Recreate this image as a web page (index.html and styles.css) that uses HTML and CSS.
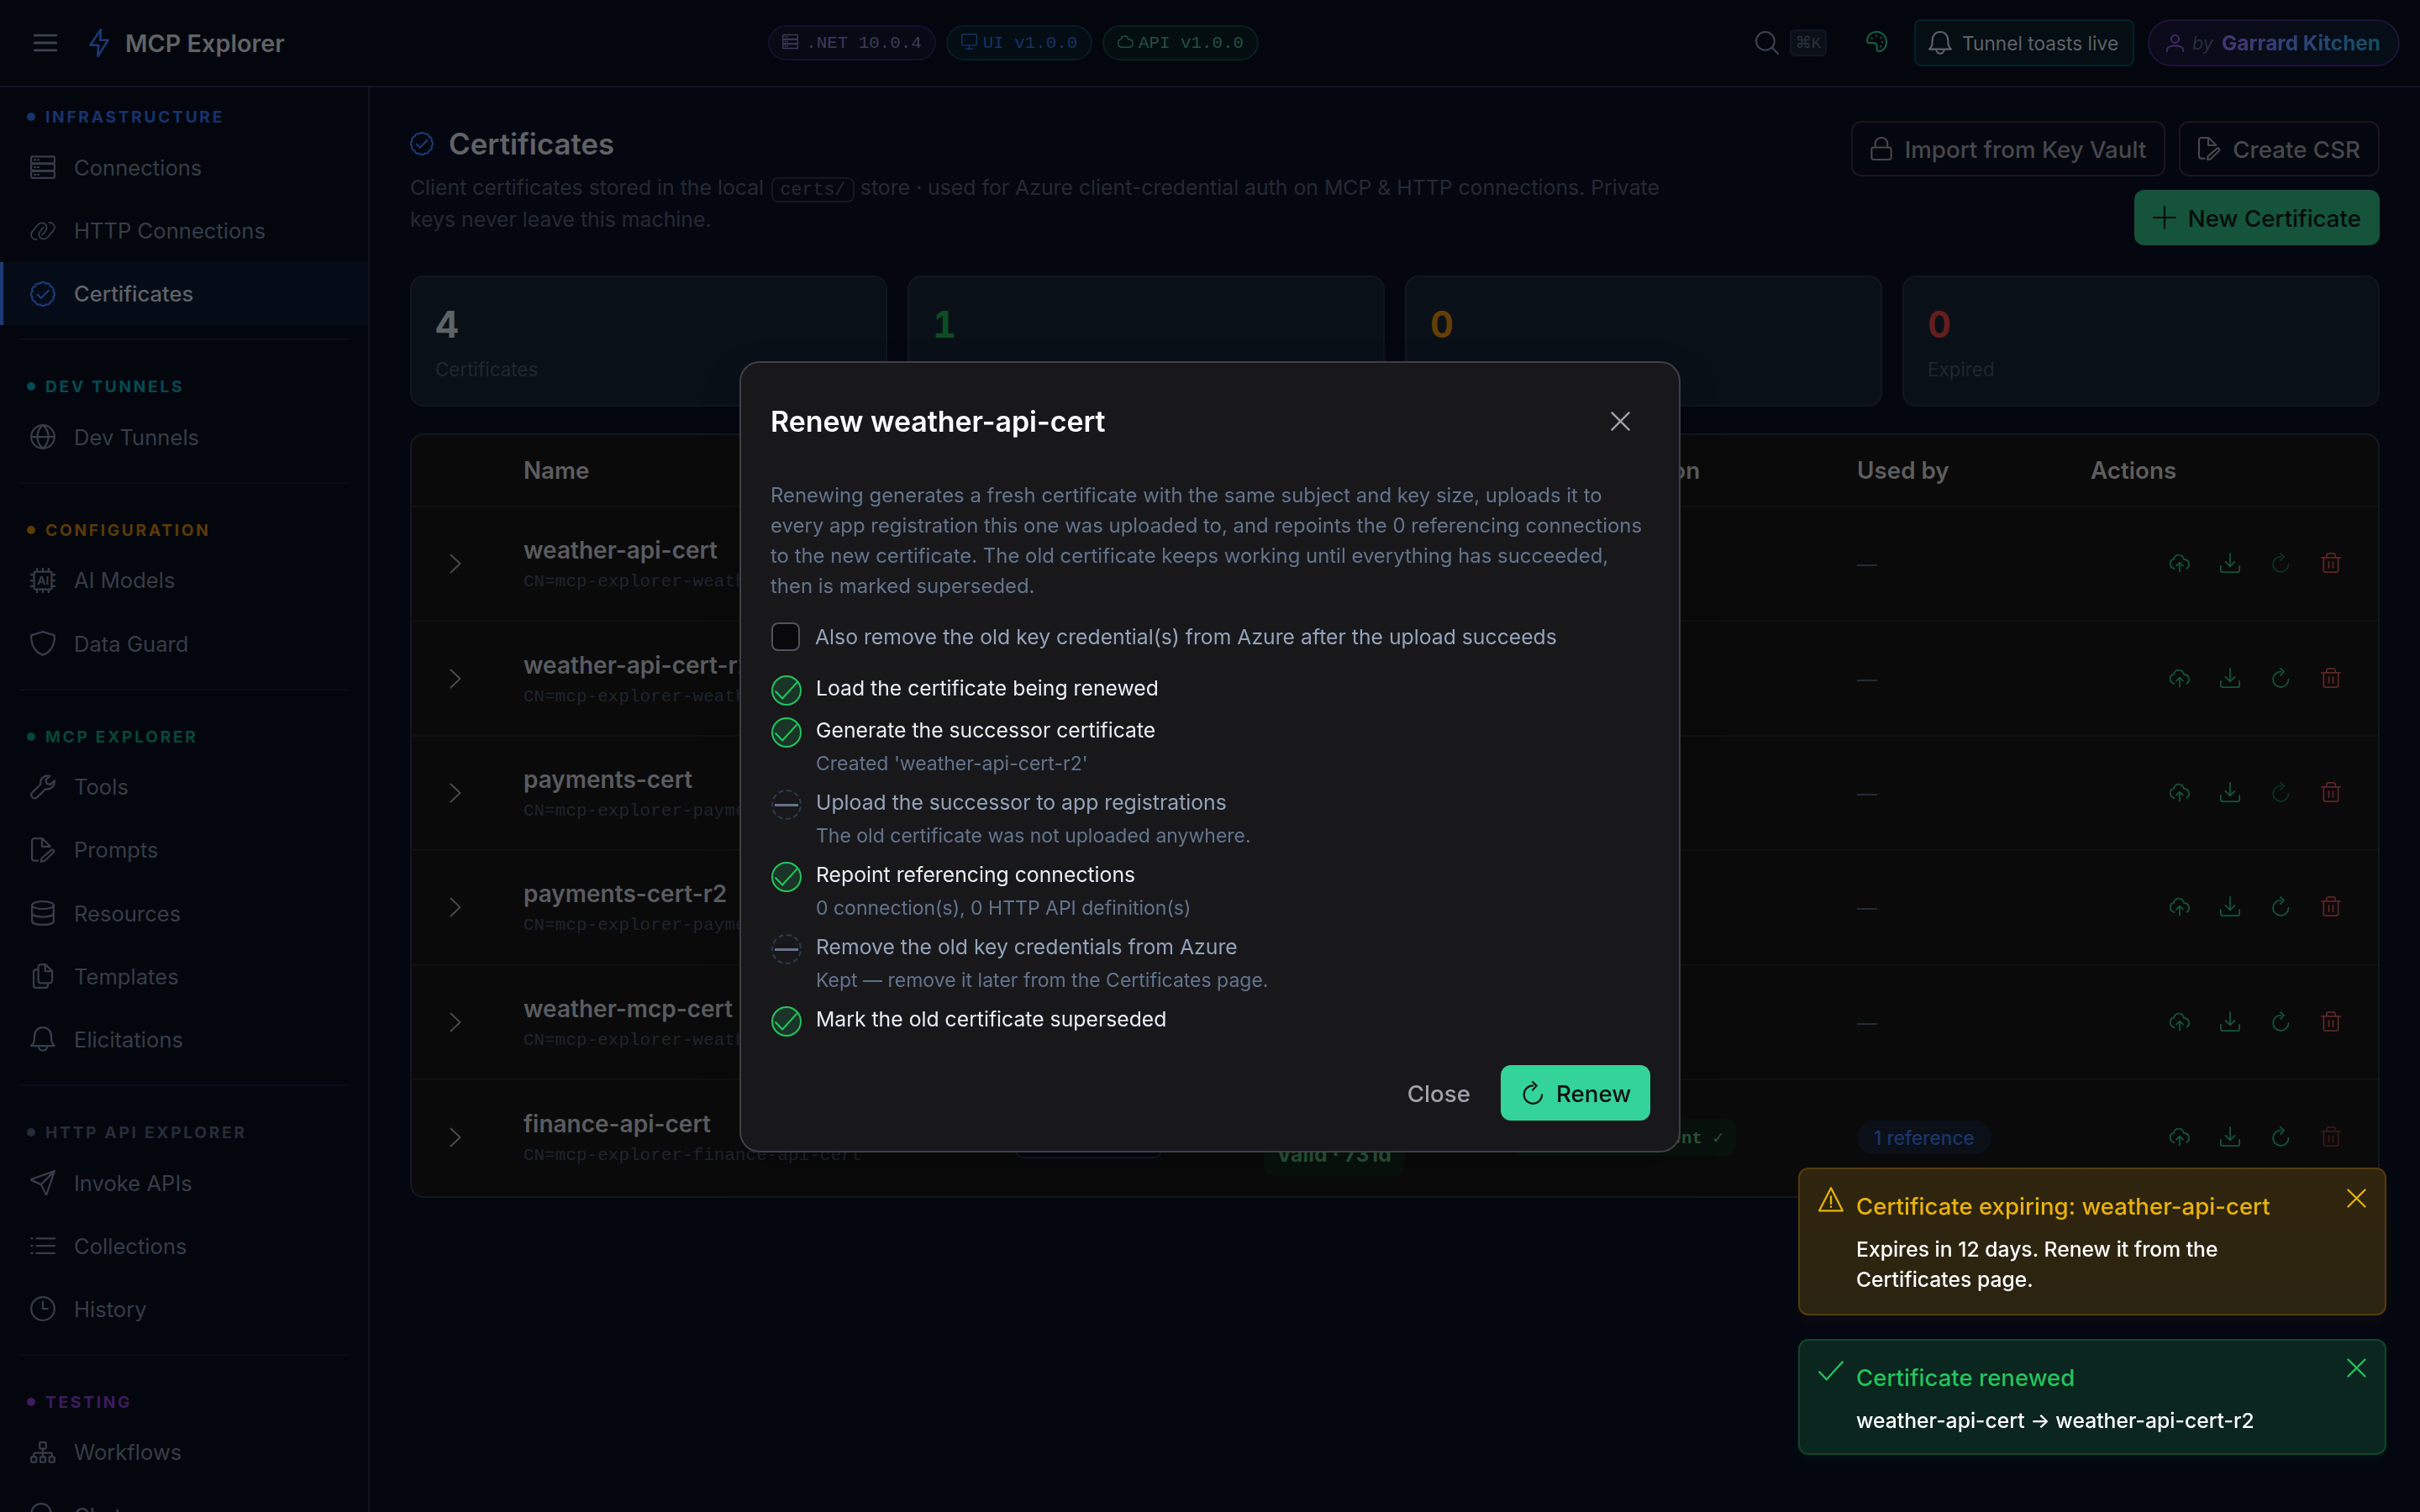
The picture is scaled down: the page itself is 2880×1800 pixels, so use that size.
FILE: index.html
```html
<!DOCTYPE html>
<html lang="en">
<head>
<meta charset="utf-8">
<title>MCP Explorer</title>
<link rel="stylesheet" href="styles.css">
</head>
<body>
<svg class="sprite" aria-hidden="true">
  <symbol id="menu" viewBox="0 0 24 24"><path d="M1 4.4h22M1 12h22M1 19.6h22"/></symbol>
  <symbol id="bolt" viewBox="0 0 24 36"><path d="M14 2 1.5 20.8h9.6L10.4 34 22.7 14.8h-9.4z"/></symbol>
  <symbol id="server" viewBox="0 0 24 24"><rect x=".9" y="1.9" width="22.2" height="6.3" rx="1"/><rect x=".9" y="8.9" width="22.2" height="6.3" rx="1"/><rect x=".9" y="15.9" width="22.2" height="6.3" rx="1"/><path d="M4 5h.8M7.2 5H8M4 12h.8M7.2 12H8M4 19h.8M7.2 19H8"/></symbol>
  <symbol id="link" viewBox="0 0 30 30"><path d="M7.5 25C4 25.2 1 23 1 19.5c0-2 .8-3.2 2.2-4.8l6-7.2C12.5 4 19.5 5 19.5 11c0 1.8-.6 3-1.8 4.5l-3.4 4"/><path transform="rotate(180 15 15)" d="M7.5 25C4 25.2 1 23 1 19.5c0-2 .8-3.2 2.2-4.8l6-7.2C12.5 4 19.5 5 19.5 11c0 1.8-.6 3-1.8 4.5l-3.4 4"/></symbol>
  <symbol id="verified" viewBox="0 0 24 24"><path d="M21.85 14.64A3.2 3.2 0 0 1 19.21 19.21A3.2 3.2 0 0 1 14.64 21.85A3.2 3.2 0 0 1 9.36 21.85A3.2 3.2 0 0 1 4.79 19.21A3.2 3.2 0 0 1 2.15 14.64A3.2 3.2 0 0 1 2.15 9.36A3.2 3.2 0 0 1 4.79 4.79A3.2 3.2 0 0 1 9.36 2.15A3.2 3.2 0 0 1 14.64 2.15A3.2 3.2 0 0 1 19.21 4.79A3.2 3.2 0 0 1 21.85 9.36A3.2 3.2 0 0 1 21.85 14.64z"/><path d="m7 12.6 3.3 3.4L17.5 8.6"/></symbol>
  <symbol id="globe" viewBox="0 0 24 24"><circle cx="12" cy="12" r="11.1"/><path d="M.9 12h22.2M12 .9c-7 6-7 16.200 0 22.200M12 .9c7 6 7 16.200 0 22.200"/></symbol>
  <symbol id="chip" viewBox="0 0 24 24"><rect x="3.6" y="3.6" width="16.8" height="16.8" rx="1.5"/><path d="M6.500 .5v3M12 .5v3M17.500 .5v3M6.500 20.500v3M12 20.500v3M17.500 20.500v3M.5 6.500h3M.5 12h3M.5 17.500h3M20.500 6.500h3M20.500 12h3M20.500 17.500h3"/><text class="chip-text" x="12.2" y="16">AI</text></symbol>
  <symbol id="shield" viewBox="0 0 24 24"><path d="M12 .9 23.100 4.300C23.400 13 20 20 12 23.100 4 20 .6 13 .9 4.300z"/></symbol>
  <symbol id="wrench" viewBox="0 0 24 24"><path d="M18.800 1.400C14 .2 9 3.500 9.800 9.400L1.800 17.300c-2.600 3 1.300 7 4.600 4.600l8.200-8c5 .8 9-3 8.400-8L19.300 9.500l-3.700-.8-.9-3.600z"/></symbol>
  <symbol id="fileedit" viewBox="0 0 24 24"><path d="M7.500 22H4a2.300 2.300 0 0 1-2.300-2.300V3.200A2.300 2.300 0 0 1 4 .9h7.500L19 8.400M11.200 1v7.600H19M20 11.900c1.500-1.200 3.400.7 2.200 2.200l-8.600 8.300-3.400.7.700-3.500z"/></symbol>
  <symbol id="database" viewBox="0 0 24 24"><ellipse cx="12" cy="4.5" rx="10.3" ry="3.6"/><path d="M1.700 4.500v15c0 4.800 20.600 4.800 20.600 0v-15M1.700 12c0 4.800 20.600 4.800 20.600 0"/></symbol>
  <symbol id="clone" viewBox="0 0 24 24"><path d="M7.600 5.800H5.500a2.300 2.300 0 0 0-2.300 2.300v12.700a2.300 2.300 0 0 0 2.300 2.300h9a2.300 2.300 0 0 0 2.300-2.300v-2.100M14.400.9H10a2.300 2.300 0 0 0-2.300 2.300v13.200A2.300 2.300 0 0 0 10 18.700h8.600a2.300 2.300 0 0 0 2.300-2.300V7.200zM14.200 1v6.300h6.500"/></symbol>
  <symbol id="bell" viewBox="0 0 24 24"><path d="M.9 18.500h22.200C20 15.500 20 13.500 20 9.500c0-5-3-8.600-8-8.600S4 4.500 4 9.500c0 4 0 6-3.100 9zM8 18.700c0 5.600 8 5.600 8 0"/></symbol>
  <symbol id="send" viewBox="0 0 24 24"><path d="M23.100.9 1 8.800c-.4.200-.4.500 0 .7l9.300 4.200 4.500 9.200c.2.400.6.400.8 0zM10.300 13.700 23.100.9"/></symbol>
  <symbol id="list" viewBox="0 0 24 24"><path d="M6 5h17.200M6 12h17.200M6 19h17.200M.9 5h1.200M.9 12h1.200M.9 19h1.200"/></symbol>
  <symbol id="clock" viewBox="0 0 24 24"><circle cx="12" cy="12" r="11.1"/><path d="M12 5.200V12h4.600"/></symbol>
  <symbol id="sitemap" viewBox="0 0 24 24"><rect x="9" y="2.5" width="6" height="6" rx="1"/><rect x=".9" y="16.3" width="5" height="5" rx="1"/><rect x="9.5" y="16.3" width="5" height="5" rx="1"/><rect x="18.1" y="16.3" width="5" height="5" rx="1"/><path d="M12 8.500v7.800M3.400 16V13.400q0-1 1-1h15.200q1 0 1 1V16"/></symbol>
  <symbol id="comments" viewBox="0 0 24 24"><path d="M2 14.500C-1 5 5.500.9 10.500.9c5 0 8.500 3.600 8.800 7.600M2 14.500 1.200 19l5-.8M19 8c6 4 4 9 2.700 10.500l.8 4-4.500-1c-5 2-9 0-11-3"/></symbol>
  <symbol id="desktop" viewBox="0 0 24 24"><rect x=".9" y="1" width="22.2" height="16.5" rx="1.5"/><path d="M12 17.500v5M7 23h10"/></symbol>
  <symbol id="cloud" viewBox="0 0 24 24"><path d="M6.800 20.500C-1 20.500-1 9.500 5.300 8.700 5.800 3 14.500 1.500 16 8.500c9 0 9 12 1 12z"/></symbol>
  <symbol id="search" viewBox="0 0 24 24"><circle cx="10.2" cy="10.2" r="9.3"/><path d="m17 17 6.200 6.200"/></symbol>
  <symbol id="palette" viewBox="0 0 24 24"><path d="M1 11C1.500 4 7 .9 12 .9c6 0 11.100 4.500 11.100 11.600 0 6-4 10.600-8.600 10.600-3.500 0-2-4-2.500-7C11.300 12 7 14 3 13.500 1.200 13 .9 12.500 1 11z"/><path d="M6.500 8.200v.1M11.500 5.500v.1M16.800 7.500v.1M18.500 12.500v.1M16.500 17.500v.1"/></symbol>
  <symbol id="user" viewBox="0 0 24 24"><circle cx="12" cy="6.2" r="5.2"/><path d="M.9 23.200V21c0-7.500 22.200-7.500 22.200 0v2.200"/></symbol>
  <symbol id="lock" viewBox="0 0 24 24"><rect x="2" y="10.7" width="20" height="12.4" rx="2.3"/><path d="M5.800 10.500V6.800c0-7.900 12.400-7.900 12.400 0v3.700"/></symbol>
  <symbol id="plus" viewBox="0 0 24 24"><path d="M12 1v22M1 12h22"/></symbol>
  <symbol id="chevron" viewBox="0 0 24 24"><path d="m6.500 1.500 11 10.500-11 10.500"/></symbol>
  <symbol id="upload" viewBox="0 0 24 24"><path d="M5.500 19C-1 17.500-.5 8.500 5 7.800 6.500 1 15.500 1 17 8c6.500 0 8 8 3.500 10.800M12 22.500V12M8 15.600l4-4 4 4"/></symbol>
  <symbol id="download" viewBox="0 0 24 24"><path d="M12 .9v15M6.500 10.800 12 16.300l5.500-5.500M.9 16v4.800a2.300 2.300 0 0 0 2.300 2.300h17.600a2.300 2.300 0 0 0 2.300-2.300V16"/></symbol>
  <symbol id="refresh" viewBox="0 0 24 24"><path d="M12.300 4.600A9.200 9.200 0 1 0 21.500 14M12 .9l4 3.800-4 4.400"/></symbol>
  <symbol id="trash" viewBox="0 0 24 24"><path d="M.9 5.800h22.200M3.300 5.800V21a2.100 2.100 0 0 0 2.100 2.100h13.200a2.100 2.100 0 0 0 2.100-2.100V5.800M6.800 5.500V3A2.100 2.100 0 0 1 8.900.9h6.200A2.100 2.100 0 0 1 17.200 3v2.500M9.500 11v7M14.500 11v7"/></symbol>
  <symbol id="times" viewBox="0 0 24 24"><path d="m1.500 1.500 21 21M22.500 1.500l-21 21"/></symbol>
  <symbol id="check" viewBox="0 0 24 24"><path d="m1 13 6.800 7.200L23 3.500"/></symbol>
  <symbol id="warning" viewBox="0 0 24 24"><path d="M12 1 .9 22.600h22.200zM12 9v7M12 18.700v.4"/></symbol>
</svg>

<div class="app">
  <header class="topbar">
    <div class="brand">
      <svg class="ic ic-28 menu-ic"><use href="#menu"/></svg>
      <svg class="bolt"><use href="#bolt"/></svg>
      <span class="brand-name">MCP Explorer</span>
    </div>
    <div class="versions">
      <span class="ver ver-net"><svg class="ic ic-19"><use href="#server"/></svg>.NET 10.0.4</span>
      <span class="ver ver-ui"><svg class="ic ic-19"><use href="#desktop"/></svg>UI v1.0.0</span>
      <span class="ver ver-api"><svg class="ic ic-19"><use href="#cloud"/></svg>API v1.0.0</span>
    </div>
    <div class="tools">
      <svg class="ic ic-28 search-ic"><use href="#search"/></svg>
      <kbd class="kbd">⌘K</kbd>
      <svg class="ic palette"><use href="#palette"/></svg>
      <button class="toasts-btn"><svg class="ic ic-28"><use href="#bell"/></svg>Tunnel toasts live</button>
      <span class="author"><svg class="ic ic-21"><use href="#user"/></svg><em>by</em><strong>Garrard Kitchen</strong></span>
    </div>
  </header>

  <div class="body">
    <nav class="sidebar">
      <section class="group c-blue">
        <h2><i></i>INFRASTRUCTURE</h2>
        <a><svg class="ic ic-30"><use href="#server"/></svg>Connections</a>
        <a><svg class="ic ic-30"><use href="#link"/></svg>HTTP Connections</a>
        <a class="active"><svg class="ic ic-30"><use href="#verified"/></svg>Certificates</a>
      </section>
      <section class="group c-teal">
        <h2><i></i>DEV TUNNELS</h2>
        <a><svg class="ic ic-30"><use href="#globe"/></svg>Dev Tunnels</a>
      </section>
      <section class="group c-amber">
        <h2><i></i>CONFIGURATION</h2>
        <a><svg class="ic ic-30"><use href="#chip"/></svg>AI Models</a>
        <a><svg class="ic ic-30"><use href="#shield"/></svg>Data Guard</a>
      </section>
      <section class="group c-green">
        <h2><i></i>MCP EXPLORER</h2>
        <a><svg class="ic ic-30"><use href="#wrench"/></svg>Tools</a>
        <a><svg class="ic ic-30"><use href="#fileedit"/></svg>Prompts</a>
        <a><svg class="ic ic-30"><use href="#database"/></svg>Resources</a>
        <a><svg class="ic ic-30"><use href="#clone"/></svg>Templates</a>
        <a><svg class="ic ic-30"><use href="#bell"/></svg>Elicitations</a>
      </section>
      <section class="group c-slate">
        <h2><i></i>HTTP API EXPLORER</h2>
        <a><svg class="ic ic-30"><use href="#send"/></svg>Invoke APIs</a>
        <a><svg class="ic ic-30"><use href="#list"/></svg>Collections</a>
        <a><svg class="ic ic-30"><use href="#clock"/></svg>History</a>
      </section>
      <section class="group c-purple">
        <h2><i></i>TESTING</h2>
        <a><svg class="ic ic-30"><use href="#sitemap"/></svg>Workflows</a>
        <a><svg class="ic ic-30"><use href="#comments"/></svg>Chat</a>
      </section>
    </nav>

    <main class="main">
      <div class="page-head">
        <div class="page-title">
          <h1><svg class="ic ic-28"><use href="#verified"/></svg>Certificates</h1>
          <p>Client certificates stored in the local <code>certs/</code> store · used for Azure client-credential auth on MCP &amp; HTTP connections. Private keys never leave this machine.</p>
        </div>
        <div class="page-actions">
          <button class="btn btn-outline"><svg class="ic ic-28"><use href="#lock"/></svg><span>Import from Key Vault</span></button>
          <button class="btn btn-outline"><svg class="ic ic-28"><use href="#fileedit"/></svg><span>Create CSR</span></button>
          <button class="btn btn-new"><svg class="ic ic-28"><use href="#plus"/></svg><span>New Certificate</span></button>
        </div>
      </div>

      <div class="stats">
        <div class="stat"><b>4</b><span>Certificates</span></div>
        <div class="stat s-green"><b>1</b><span>Valid</span></div>
        <div class="stat s-amber"><b>0</b><span>Expiring</span></div>
        <div class="stat s-red"><b>0</b><span>Expired</span></div>
      </div>

      <div class="table">
        <div class="tr th"><div></div><div>Name</div><div></div><div></div><div>App registration</div><div>Used by</div><div>Actions</div></div>

        <div class="tr"><svg class="ic ic-24 chev"><use href="#chevron"/></svg><div class="name"><b>weather-api-cert</b><small>CN=mcp-explorer-weather-api-cert</small></div><div></div><div></div><div></div><div class="none">—</div>
          <div class="acts"><svg class="ic ic-24"><use href="#upload"/></svg><svg class="ic ic-24"><use href="#download"/></svg><svg class="ic ic-24 off"><use href="#refresh"/></svg><svg class="ic ic-24 del"><use href="#trash"/></svg></div></div>

        <div class="tr"><svg class="ic ic-24 chev"><use href="#chevron"/></svg><div class="name"><b>weather-api-cert-r2</b><small>CN=mcp-explorer-weather-api-cert</small></div><div></div><div></div><div></div><div class="none">—</div>
          <div class="acts"><svg class="ic ic-24"><use href="#upload"/></svg><svg class="ic ic-24"><use href="#download"/></svg><svg class="ic ic-24"><use href="#refresh"/></svg><svg class="ic ic-24 del"><use href="#trash"/></svg></div></div>

        <div class="tr"><svg class="ic ic-24 chev"><use href="#chevron"/></svg><div class="name"><b>payments-cert</b><small>CN=mcp-explorer-payments-cert</small></div><div></div><div></div><div></div><div class="none">—</div>
          <div class="acts"><svg class="ic ic-24"><use href="#upload"/></svg><svg class="ic ic-24"><use href="#download"/></svg><svg class="ic ic-24 off"><use href="#refresh"/></svg><svg class="ic ic-24 del"><use href="#trash"/></svg></div></div>

        <div class="tr"><svg class="ic ic-24 chev"><use href="#chevron"/></svg><div class="name"><b>payments-cert-r2</b><small>CN=mcp-explorer-payments-cert</small></div><div></div><div></div><div></div><div class="none">—</div>
          <div class="acts"><svg class="ic ic-24"><use href="#upload"/></svg><svg class="ic ic-24"><use href="#download"/></svg><svg class="ic ic-24"><use href="#refresh"/></svg><svg class="ic ic-24 del"><use href="#trash"/></svg></div></div>

        <div class="tr"><svg class="ic ic-24 chev"><use href="#chevron"/></svg><div class="name"><b>weather-mcp-cert</b><small>CN=mcp-explorer-weather-mcp-cert</small></div><div></div><div></div><div></div><div class="none">—</div>
          <div class="acts"><svg class="ic ic-24"><use href="#upload"/></svg><svg class="ic ic-24"><use href="#download"/></svg><svg class="ic ic-24"><use href="#refresh"/></svg><svg class="ic ic-24 del"><use href="#trash"/></svg></div></div>

        <div class="tr"><svg class="ic ic-24 chev"><use href="#chevron"/></svg><div class="name"><b>finance-api-cert</b><small>CN=mcp-explorer-finance-api-cert</small></div><div><span class="thumb"></span></div><div class="status"><span class="badge-valid">Valid · 731d</span></div><div><span class="badge-reg">finance-agent ✓</span></div><div><span class="badge-ref">1 reference</span></div>
          <div class="acts"><svg class="ic ic-24"><use href="#upload"/></svg><svg class="ic ic-24"><use href="#download"/></svg><svg class="ic ic-24"><use href="#refresh"/></svg><svg class="ic ic-24 del dim"><use href="#trash"/></svg></div></div>
      </div>
    </main>
  </div>
</div>

<div class="overlay">
  <div class="modal" role="dialog">
    <div class="modal-head"><h3>Renew weather-api-cert</h3><svg class="ic modal-x"><use href="#times"/></svg></div>
    <p class="modal-text">Renewing generates a fresh certificate with the same subject and key size, uploads it to every app registration this one was uploaded to, and repoints the 0 referencing connections to the new certificate. The old certificate keeps working until everything has succeeded, then is marked superseded.</p>
    <label class="check-row"><span class="box"></span>Also remove the old key credential(s) from Azure after the upload succeeds</label>
    <ul class="steps">
      <li class="done"><span class="dot"><svg class="ic ic-28"><use href="#check"/></svg></span><div><b>Load the certificate being renewed</b></div></li>
      <li class="done"><span class="dot"><svg class="ic ic-28"><use href="#check"/></svg></span><div><b>Generate the successor certificate</b><small>Created 'weather-api-cert-r2'</small></div></li>
      <li class="skip"><span class="dot"><i></i></span><div><b>Upload the successor to app registrations</b><small>The old certificate was not uploaded anywhere.</small></div></li>
      <li class="done"><span class="dot"><svg class="ic ic-28"><use href="#check"/></svg></span><div><b>Repoint referencing connections</b><small>0 connection(s), 0 HTTP API definition(s)</small></div></li>
      <li class="skip"><span class="dot"><i></i></span><div><b>Remove the old key credentials from Azure</b><small>Kept — remove it later from the Certificates page.</small></div></li>
      <li class="done"><span class="dot"><svg class="ic ic-28"><use href="#check"/></svg></span><div><b>Mark the old certificate superseded</b></div></li>
    </ul>
    <div class="modal-foot">
      <button class="btn btn-text"><span>Close</span></button>
      <button class="btn btn-renew"><svg class="ic ic-28"><use href="#refresh"/></svg><span>Renew</span></button>
    </div>
  </div>
</div>

<div class="toasts">
  <div class="toast t-warn"><svg class="ic ic-30"><use href="#warning"/></svg><div><b>Certificate expiring: weather-api-cert</b><p>Expires in 12 days. Renew it from the Certificates page.</p></div><svg class="ic toast-x"><use href="#times"/></svg></div>
  <div class="toast t-ok"><svg class="ic ic-30"><use href="#check"/></svg><div><b>Certificate renewed</b><p>weather-api-cert → weather-api-cert-r2</p></div><svg class="ic toast-x"><use href="#times"/></svg></div>
</div>
</body>
</html>
```
FILE: styles.css
```css
* { box-sizing: border-box; }
html, body { margin: 0; height: 100%; }
body {
  width: 2880px;
  height: 1800px;
  overflow: hidden;
  background: #040710;
  font-family: Inter, "Liberation Sans", sans-serif;
  font-size: 24px;
  color: #5f6366;
}
h1, h2, h3, p, ul { margin: 0; padding: 0; }
button { font: inherit; color: inherit; background: none; border: 0; padding: 0; }
.sprite { display: none; }
.ic, .bolt { flex: none; fill: none; stroke: currentColor; stroke-width: 1.8; stroke-linecap: round; stroke-linejoin: round; }
.ic { width: 24px; height: 24px; }
.ic-19 { width: 19px; height: 19px; }
.ic-21 { width: 21px; height: 21px; }
.ic-28 { width: 28px; height: 28px; }
.ic-30 { width: 30px; height: 30px; }
.chip-text { font: 700 11px Inter, sans-serif; text-anchor: middle; fill: currentColor; stroke: none; }

.app { display: flex; flex-direction: column; height: 1800px; }

/* Top bar */
.topbar {
  flex: none;
  display: flex;
  align-items: center;
  height: 104px;
  padding: 0 24px 0 40px;
  background: #03060d;
  border-bottom: 2px solid #10161f;
}
.brand { display: flex; align-items: center; width: 874px; }
.menu-ic { color: #3c434c; stroke-width: 2.4; }
.bolt { width: 24px; height: 36px; margin-left: 38px; color: #1b3a74; stroke-width: 2.6; }
.brand-name { margin-left: 19px; font-size: 28.8px; font-weight: 600; }
.versions { display: flex; gap: 12px; }
.ver {
  display: flex; align-items: center; justify-content: center; gap: 6px;
  height: 42px;
  border: 2px solid; border-radius: 21px;
  font: 20.8px "Liberation Mono", monospace;
}
.ver svg { margin-top: -3px; }
.ver-net { width: 200px; color: #3b3b59; border-color: #12122f; background: #070a15; gap: 9px; }
.ver-ui { width: 174px; color: #153465; border-color: #081c28; background: #040d13; gap: 7px; }
.ver-api { width: 186px; color: #235141; border-color: #08211d; background: #040e11; }
.tools { flex: 1; display: flex; align-items: center; justify-content: flex-end; }
.search-ic { color: #3c434c; }
.kbd {
  display: flex; align-items: center; justify-content: center;
  width: 44px; height: 32px; margin-left: 13px;
  border: 2px solid #10171f; border-radius: 6px; background: #0b1017;
  font: 19.2px "Liberation Mono", "DejaVu Sans", monospace; color: #2b323c;
}
.palette { width: 25px; height: 25px; margin: -3px 32px 0 47px; color: #17593f; stroke-width: 2.2; }
.toasts-btn {
  display: flex; align-items: center; gap: 12px;
  width: 262px; height: 56px; padding-left: 15px;
  border: 2px solid #042127; border-radius: 8px; background: #040e13;
  font-size: 22.7px; white-space: nowrap;
}
.author {
  display: flex; align-items: center;
  width: 300px; height: 56px; margin-left: 16px; padding-left: 20px;
  border: 2px solid #1b1438; border-radius: 28px;
  background: linear-gradient(90deg, #0b0a1a, #050e16);
  white-space: nowrap;
}
.author svg { color: #43286b; stroke-width: 2.2; }
.author em { margin: 0 10px; font-size: 21.6px; color: #272d3a; }
.author strong {
  font-size: 24.4px; font-weight: 700;
  background: linear-gradient(90deg, #453671, #2c4476 50%, #164d60);
  -webkit-background-clip: text; background-clip: text; color: transparent;
}

/* Sidebar */
.body { flex: 1; min-height: 0; display: flex; }
.sidebar {
  flex: none; width: 440px; padding-top: 13px; overflow: hidden;
  background: #03060d; border-right: 2px solid #0f151e;
}
.group h2 {
  display: flex; align-items: center; gap: 12px;
  height: 44.8px; padding-left: 32px;
  font-size: 19.2px; font-weight: 700; letter-spacing: 2.7px;
}
.group h2 i { width: 10px; height: 10px; border-radius: 50%; background: currentColor; }
.group a {
  display: flex; align-items: center; gap: 22px;
  height: 75.2px; padding-left: 36px;
  font-size: 25.6px; color: #363d47;
}
.group a.active { padding-left: 32px; border-left: 4px solid #1c3b78; background: #050c18; color: #5f6366; font-weight: 500; }
.group a.active svg { color: #1b3a74; }
.group + .group::before { content: ""; display: block; height: 2px; margin: 16px 24px 32.6px; background: #090e15; }
.c-blue h2 { color: #18336b; }
.c-teal h2 { color: #044a52; }
.c-amber h2 { color: #5c3b04; }
.c-green h2 { color: #07463b; }
.c-slate h2 { color: #252d38; }
.c-purple h2 { color: #3d1c5e; }

/* Page */
.main { flex: 1; min-width: 0; padding: 40px 48px; background: #040710; }
.page-head { display: flex; justify-content: space-between; height: 184px; }
.page-title { width: 1520px; }
.page-title h1 { display: flex; align-items: center; gap: 18px; height: 54px; font-size: 34.8px; font-weight: 600; }
.page-title h1 svg { color: #1b3a74; }
.page-title p { margin-top: 6px; font-size: 24.8px; line-height: 38.4px; color: #242a35; }
.page-title code { margin-left: 2px; padding: 1px 8.5px; border: 2px solid #121924; border-radius: 8px; font: 21.6px "Liberation Mono", monospace; }
.page-actions { display: flex; flex-wrap: wrap; justify-content: flex-end; align-content: flex-start; gap: 16px; width: 700px; }
.btn { display: flex; align-items: center; gap: 14px; height: 66px; padding: 0 20px; border: 2px solid transparent; border-radius: 12px; font-size: 27.7px; font-weight: 500; }
.btn span { padding-top: 1px; }
.btn-outline { padding: 0 21px 0 20px; border-color: #18181b; color: #47474b; }
.btn-new { background: #15543b; color: #060b0a; }

.stats { display: grid; grid-template-columns: repeat(4, 1fr); gap: 24px; }
.stat { display: flex; flex-direction: column; height: 156px; padding: 28px; border: 2px solid #101722; border-radius: 16px; background: #0a1018; }
.stat b { font-size: 43.2px; line-height: 56px; font-weight: 700; font-variant-numeric: tabular-nums; }
.stat span { margin-top: 9px; font-size: 22.4px; line-height: 33px; color: #20262f; }
.s-green b { color: #0d4d25; }
.s-amber b { color: #653e04; }
.s-red b { color: #651d1d; }

.table { margin-top: 32px; border: 2px solid #111821; border-radius: 16px; background: #0a0a0a; overflow: hidden; }
.tr {
  display: grid; align-items: center;
  grid-template-columns: 133px 585px 296px 297px 409px 278px 1fr;
  height: 136.4px; border-bottom: 2px solid #101011;
}
.tr:last-child { height: 138px; border-bottom: 0; padding-bottom: 1px; }
.th { height: 86px; font-size: 27.8px; font-weight: 600; color: #5d5d5f; }
.th div:nth-child(5) { padding-left: 6px; }
.chev { margin: 0 0 0 40px; color: #47474b; stroke-width: 2.1; }
.name { display: flex; flex-direction: column; padding-top: 1px; }
.name b { margin-top: -1px; font-size: 28px; font-weight: 600; line-height: 42px; color: #595c60; }
.name small { margin-top: 1px; font: 20.8px/31px "Liberation Mono", monospace; letter-spacing: .12px; color: #1f252f; }
.none { padding-top: 1px; color: #252b36; }
.acts { display: flex; justify-content: flex-end; gap: 36px; padding: 0 44px 2px 0; color: #14543b; }
.acts .off { color: #0e3125; }
.acts .del { color: #5f2525; }
.acts .dim { color: #391919; }
.thumb { display: block; width: 175px; height: 50px; border: 2px solid #121924; border-radius: 10px; background: #04070f; }
.status { padding-top: 40px; }
.badge-valid, .badge-reg, .badge-ref { display: inline-flex; align-items: center; height: 44px; padding: 0 15px; border-radius: 12px; background: #08120d; color: #2a553a; }
.badge-valid { display: flex; width: 168px; height: 52px; font-size: 24.8px; font-weight: 700; white-space: nowrap; }
.badge-reg { justify-content: flex-end; width: 265px; font: 700 20.8px "Liberation Mono", monospace; }
.badge-ref { height: 40px; padding: 0 20px; border-radius: 20px; background: #0a0f18; color: #19366d; font-size: 22.6px; font-weight: 500; }

/* Dialog */
.overlay { position: fixed; inset: 0; display: flex; align-items: center; justify-content: center; padding-top: 2px; }
.modal {
  display: flex; flex-direction: column;
  width: 1120px; height: 942px; padding: 34px 34px 36px 35px;
  border: 2px solid #3f3f46; border-radius: 24px; background: #18181b;
  box-shadow: 0 20px 50px rgba(0, 0, 0, .2);
}
.modal-head { display: flex; align-items: center; justify-content: space-between; height: 70px; padding-right: 24px; }
.modal-head h3 { font-size: 33.9px; font-weight: 600; color: #fff; }
.modal-x { width: 23px; height: 23px; color: #a1a1aa; stroke-width: 2.5; }
.modal-text { margin-top: 36px; font-size: 23.92px; line-height: 36px; color: #64748b; }
.check-row { display: flex; align-items: center; gap: 18px; height: 36px; margin-top: 24px; padding-left: 1px; font-size: 24.75px; color: #94a3b8; }
.box { width: 34px; height: 34px; border: 2px solid #52525b; border-radius: 8px; background: #09090b; }
.steps { display: flex; flex-direction: column; gap: 12px; margin-top: 26px; list-style: none; }
.steps li { display: flex; gap: 17px; padding-left: 1px; }
.steps li > div { display: flex; flex-direction: column; gap: 6px; }
.steps b { margin-top: -1px; font-size: 24.75px; font-weight: 400; line-height: 36px; color: #e9eef5; }
.steps small { font-size: 23px; line-height: 33px; color: #64748b; }
.dot { display: flex; align-items: center; justify-content: center; width: 36px; height: 36px; margin-top: 2px; border: 2px solid #22c55e; border-radius: 50%; background: #1a3527; color: #22c55e; }
.skip .dot { border: 2px dashed #2c3b50; background: none; }
.skip .dot i { width: 28px; height: 3px; background: #64748b; }
.skip b { color: #94a3b8; }
.modal-foot { display: flex; justify-content: flex-end; gap: 14px; margin-top: auto; }
.btn-text { color: #a1a1aa; }
.btn-renew { width: 178px; padding-left: 22px; background: #34d399; color: #101012; }

/* Toasts */
.toasts { position: fixed; right: 40px; bottom: 68px; display: flex; flex-direction: column; gap: 28px; width: 700px; }
.toast { display: flex; align-items: flex-start; padding: 22px 22px 0; border: 2px solid; border-radius: 12px; }
.toast > div { flex: 1; margin: 1px 60px 0 15px; }
.toast b { display: block; font-size: 27.6px; font-weight: 500; line-height: 42px; white-space: nowrap; }
.toast p { margin-top: 12px; font-size: 24.7px; font-weight: 500; line-height: 36px; color: #fff; }
.toast-x { width: 23px; height: 23px; margin-top: 1px; stroke-width: 2.3; }
.t-warn { height: 176px; color: #eab308; border-color: #573a0b; background: linear-gradient(#30250f, #2b2410); box-shadow: 0 8px 16px rgba(234, 179, 8, .04); }
.t-warn .ic-30 { margin-top: -1px; }
.t-ok { height: 138px; color: #22c55e; border-color: #0f482b; background: #0b261e; box-shadow: 0 8px 16px rgba(34, 197, 94, .04); }
.t-ok .ic-30 { margin-top: -1px; }
.t-ok .toast-x { margin-top: -1px; }
```
